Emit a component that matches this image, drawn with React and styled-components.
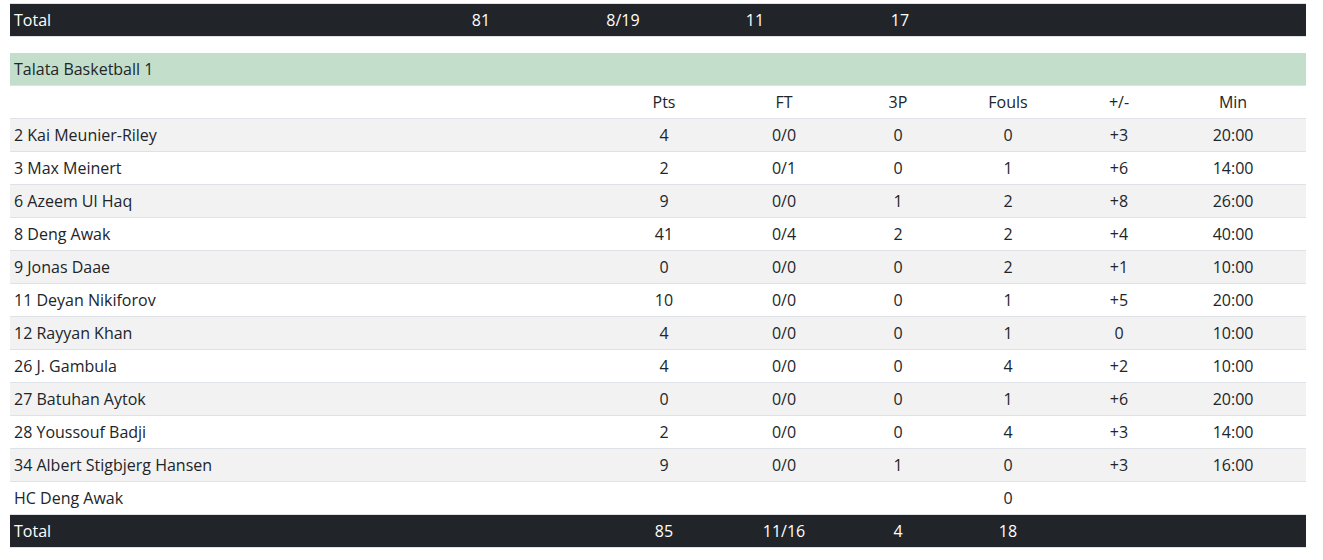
import React from 'react'
import styled, { createGlobalStyle } from 'styled-components'

const GlobalStyle = createGlobalStyle`
  body {
    margin: 0;
    background: #fff;
    font-family: "Open Sans", "Noto Sans", sans-serif;
    color: #212529;
  }
`;

const Page = styled.div`
  width: 1296px;
  padding: 3px 0 0 10px;
`;

const Table = styled.table`
  width: 100%;
  border-collapse: collapse;
  table-layout: fixed;
  font-size: 16px;
  line-height: 24px;
  margin-bottom: ${p => p.$gap || 0}px;
`;

const Cell = styled.td`
  padding: 4px;
  height: 24px;
  text-align: ${p => (p.$left ? 'left' : 'center')};
  border-top: 1px solid #dee2e6;
  white-space: nowrap;
`;

const Row = styled.tr`
  background: ${p => (p.$striped ? '#f2f2f2' : '#fff')};
`;

const TotalRow = styled.tr`
  background: #212529;
  color: #fff;
  td {
    border-top: 1px solid #dee2e6;
    border-bottom: 1px solid #dee2e6;
  }
`;

const TeamRow = styled.tr`
  background: #c3dfcc;
  td {
    border-top: none;
  }
`;

const topCols = [430, 82, 202, 62, 228, 146, 146];
const cols = [608, 92, 148, 80, 140, 82, 146];

const players = [
  ['2 Kai Meunier-Riley', '4', '0/0', '0', '0', '+3', '20:00'],
  ['3 Max Meinert', '2', '0/1', '0', '1', '+6', '14:00'],
  ['6 Azeem Ul Haq', '9', '0/0', '1', '2', '+8', '26:00'],
  ['8 Deng Awak', '41', '0/4', '2', '2', '+4', '40:00'],
  ['9 Jonas Daae', '0', '0/0', '0', '2', '+1', '10:00'],
  ['11 Deyan Nikiforov', '10', '0/0', '0', '1', '+5', '20:00'],
  ['12 Rayyan Khan', '4', '0/0', '0', '1', '0', '10:00'],
  ['26 J. Gambula', '4', '0/0', '0', '4', '+2', '10:00'],
  ['27 Batuhan Aytok', '0', '0/0', '0', '1', '+6', '20:00'],
  ['28 Youssouf Badji', '2', '0/0', '0', '4', '+3', '14:00'],
  ['34 Albert Stigbjerg Hansen', '9', '0/0', '1', '0', '+3', '16:00'],
  ['HC Deng Awak', '', '', '', '0', '', ''],
];

const Cols = ({ widths }) => (
  <colgroup>
    {widths.map((w, i) => <col key={i} style={{ width: w }} />)}
  </colgroup>
);

const Cells = ({ values }) =>
  values.map((v, i) => (
    <Cell key={i} $left={i === 0}>{v}</Cell>
  ));

export default function App() {
  return (
    <>
      <GlobalStyle />
      <Page>
        <Table $gap={16}>
          <Cols widths={topCols} />
          <tbody>
            <TotalRow>
              <Cells values={['Total', '81', '8/19', '11', '17', '', '']} />
            </TotalRow>
          </tbody>
        </Table>
        <Table>
          <Cols widths={cols} />
          <tbody>
            <TeamRow>
              <Cell $left colSpan={7}>Talata Basketball 1</Cell>
            </TeamRow>
            <Row>
              <Cells values={['', 'Pts', 'FT', '3P', 'Fouls', '+/-', 'Min']} />
            </Row>
            {players.map((p, i) => (
              <Row key={p[0]} $striped={i % 2 === 0}>
                <Cells values={p} />
              </Row>
            ))}
            <TotalRow>
              <Cells values={['Total', '85', '11/16', '4', '18', '', '']} />
            </TotalRow>
          </tbody>
        </Table>
      </Page>
    </>
  )
}
